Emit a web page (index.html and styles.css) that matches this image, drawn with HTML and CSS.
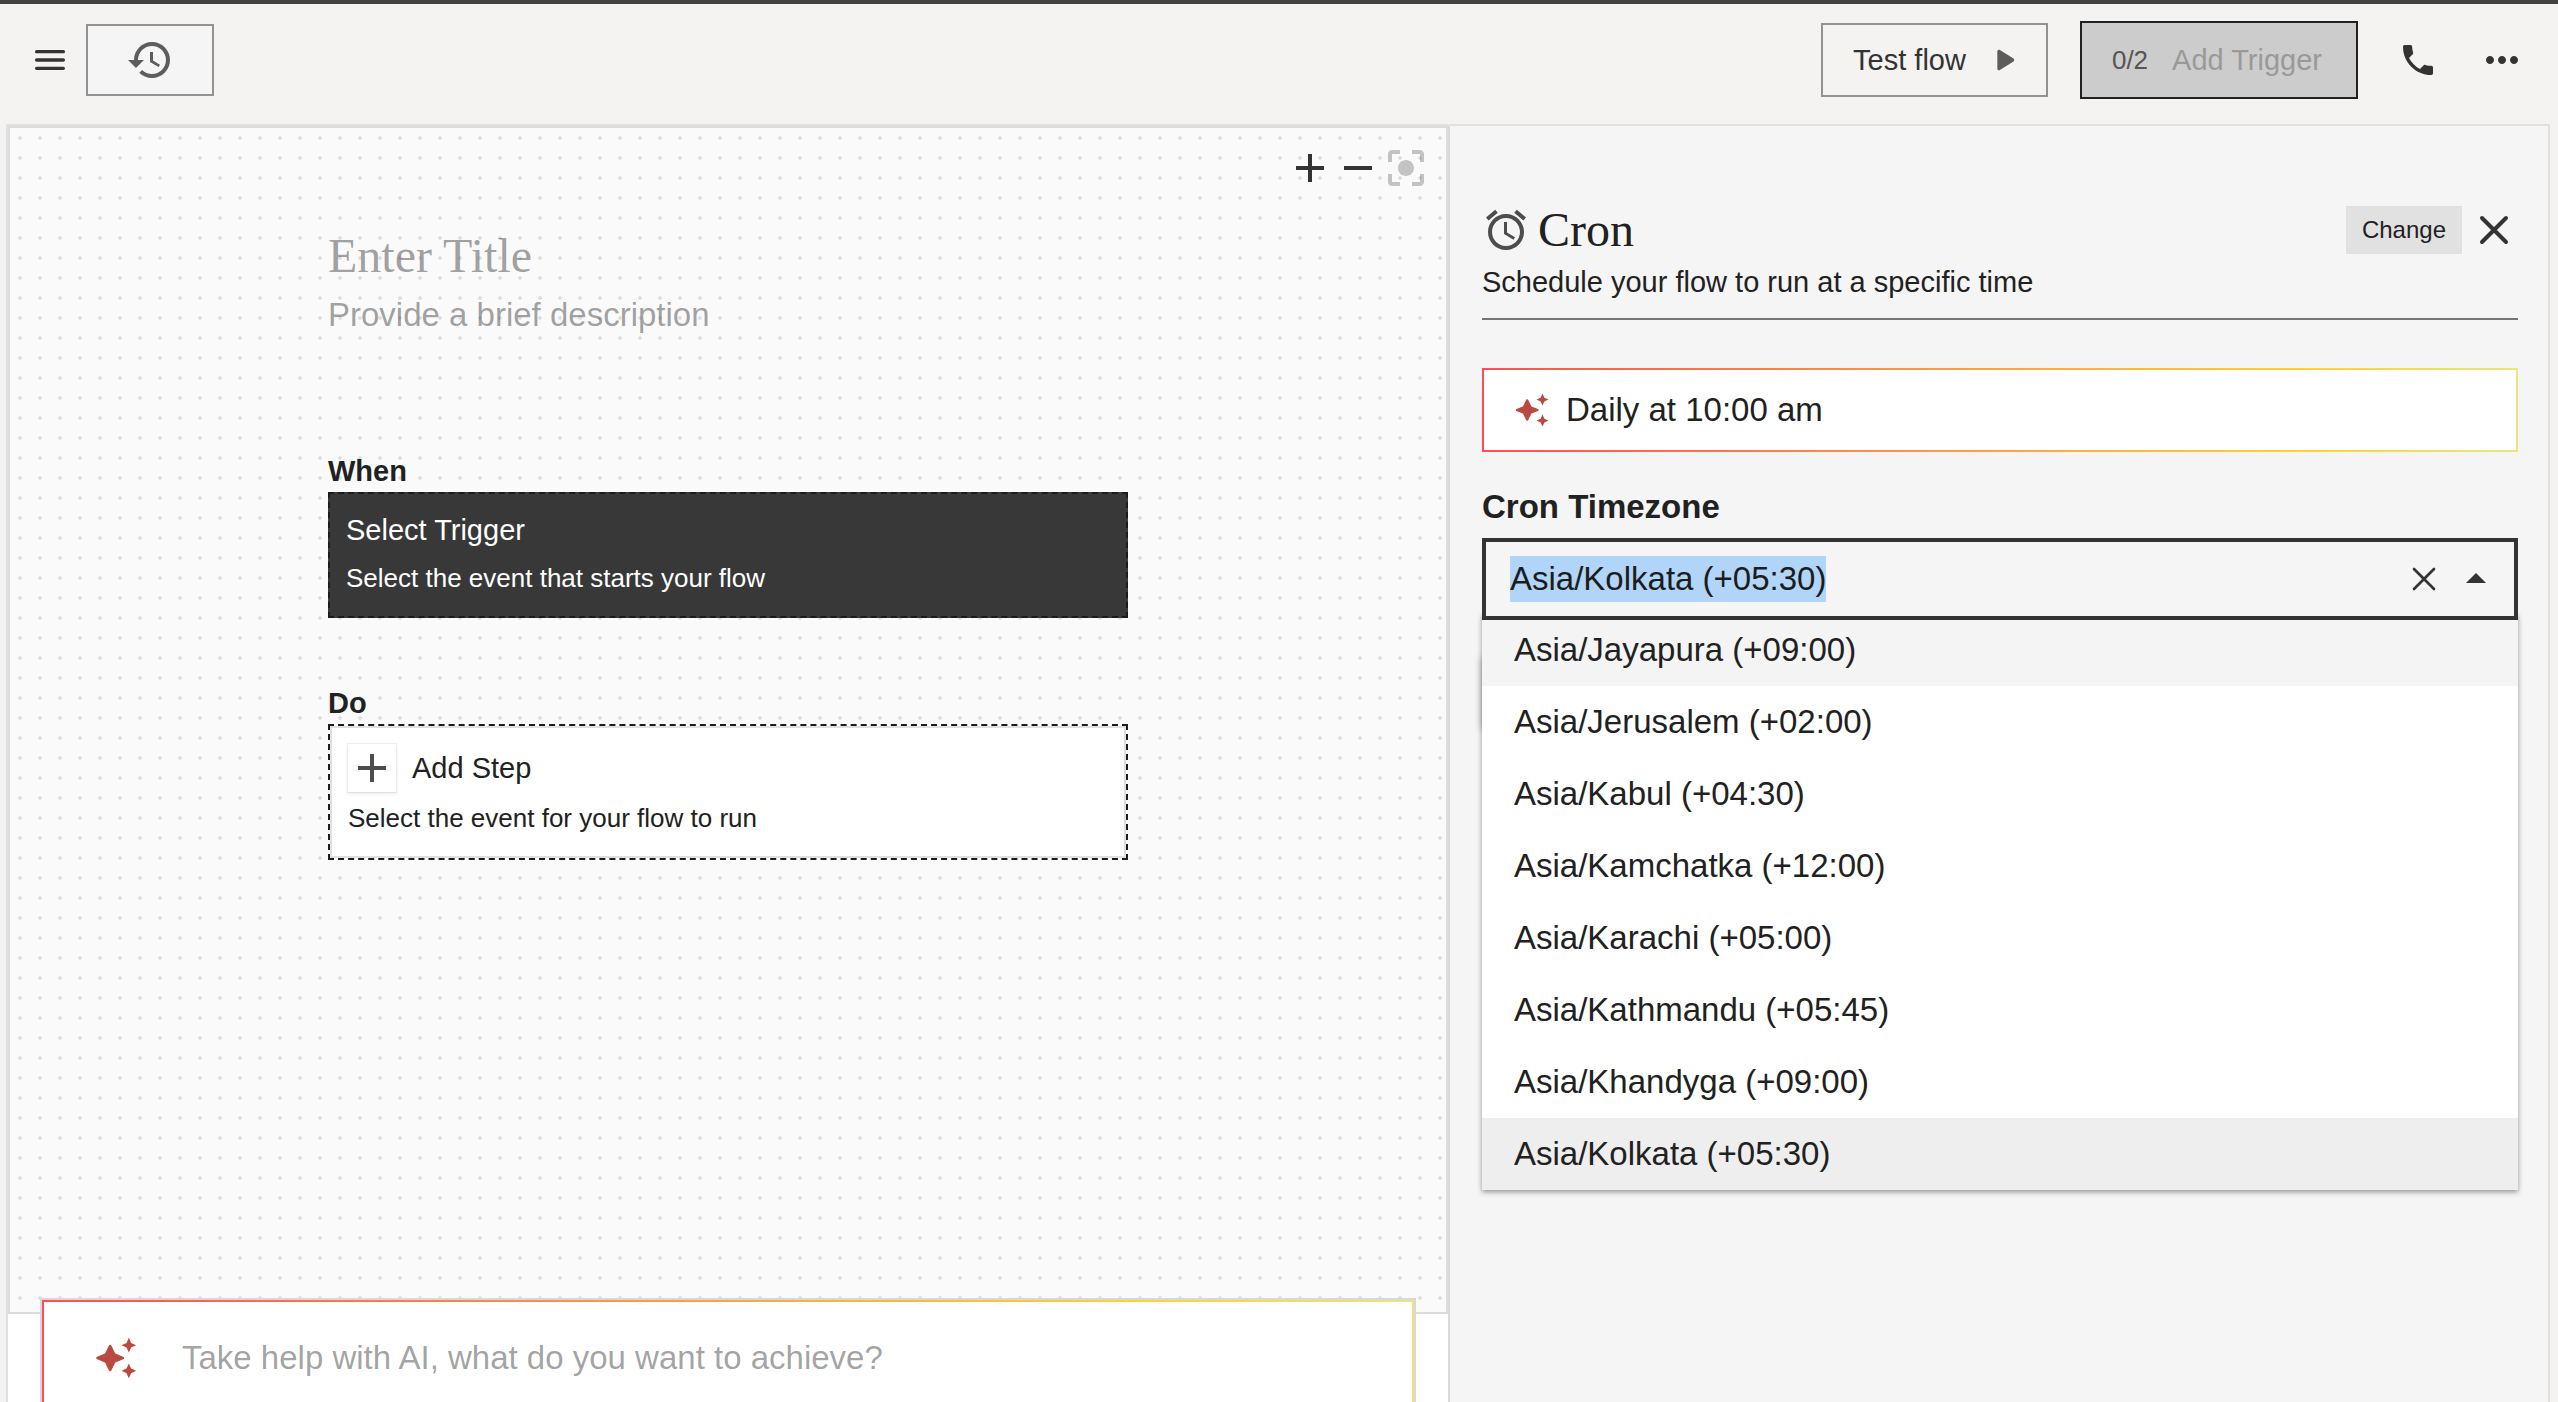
FILE: index.html
```html
<!DOCTYPE html>
<html lang="en">
<head>
  <meta charset="UTF-8">
  <title>Flow Builder</title>
  <link rel="stylesheet" href="styles.css">
</head>
<body>

<!-- Top bar -->
<header class="topbar">
  <button class="icon-btn" aria-label="Menu">
    <svg class="icon-md" viewBox="0 0 24 24"><path d="M4 18h16c.55 0 1-.45 1-1s-.45-1-1-1H4c-.55 0-1 .45-1 1s.45 1 1 1zm0-5h16c.55 0 1-.45 1-1s-.45-1-1-1H4c-.55 0-1 .45-1 1s.45 1 1 1zM3 7c0 .55.45 1 1 1h16c.55 0 1-.45 1-1s-.45-1-1-1H4c-.55 0-1 .45-1 1z"/></svg>
  </button>
  <button class="history-btn" aria-label="History">
    <svg class="icon-lg" viewBox="0 0 24 24"><path d="M13 3c-4.97 0-9 4.03-9 9H1l3.89 3.89.07.14L9 12H6c0-3.87 3.13-7 7-7s7 3.13 7 7-3.13 7-7 7c-1.93 0-3.68-.79-4.94-2.06l-1.42 1.42C8.27 19.99 10.51 21 13 21c4.97 0 9-4.03 9-9s-4.03-9-9-9zm-1 5v5l4.28 2.54.72-1.21-3.5-2.08V8H12z"/></svg>
  </button>
  <div class="topbar-right">
    <button class="test-btn">
      Test flow
      <svg class="icon-md" viewBox="0 0 24 24"><path d="M8 6.82v10.36c0 .79.87 1.27 1.54.84l8.14-5.18c.62-.39.62-1.29 0-1.69L9.54 5.98C8.87 5.55 8 6.03 8 6.82z"/></svg>
    </button>
    <button class="trigger-btn" disabled><span class="count">0/2</span>Add Trigger</button>
    <button class="icon-btn phone" aria-label="Call">
      <svg class="icon-md" viewBox="0 0 24 24"><path d="M6.62 10.79c1.44 2.83 3.76 5.14 6.59 6.59l2.2-2.2c.27-.27.67-.36 1.02-.24 1.12.37 2.33.57 3.57.57.55 0 1 .45 1 1V20c0 .55-.45 1-1 1-9.39 0-17-7.61-17-17 0-.55.45-1 1-1h3.5c.55 0 1 .45 1 1 0 1.25.2 2.45.57 3.57.11.35.03.74-.25 1.02l-2.2 2.2z"/></svg>
    </button>
    <button class="icon-btn" aria-label="More">
      <svg class="icon-lg" viewBox="0 0 24 24"><path d="M6 10c-1.1 0-2 .9-2 2s.9 2 2 2 2-.9 2-2-.9-2-2-2zm12 0c-1.1 0-2 .9-2 2s.9 2 2 2 2-.9 2-2-.9-2-2-2zm-6 0c-1.1 0-2 .9-2 2s.9 2 2 2 2-.9 2-2-.9-2-2-2z"/></svg>
    </button>
  </div>
</header>

<main class="workspace">

  <!-- Flow canvas -->
  <section class="editor">
    <div class="canvas">
      <div class="zoom-tools">
        <button class="icon-btn" aria-label="Zoom in">
          <svg class="icon-lg" viewBox="0 0 24 24"><path d="M19 13h-6v6h-2v-6H5v-2h6V5h2v6h6v2z"/></svg>
        </button>
        <button class="icon-btn" aria-label="Zoom out">
          <svg class="icon-lg" viewBox="0 0 24 24"><path d="M19 13H5v-2h14v2z"/></svg>
        </button>
        <button class="icon-btn" aria-label="Center" disabled>
          <svg class="icon-lg" viewBox="0 0 24 24"><path d="M12 8c-2.21 0-4 1.79-4 4s1.79 4 4 4 4-1.79 4-4-1.79-4-4-4zm-7 7H3v4c0 1.1.9 2 2 2h4v-2H5v-4zM5 5h4V3H5c-1.1 0-2 .9-2 2v4h2V5zm14-2h-4v2h4v4h2V5c0-1.1-.9-2-2-2zm0 16h-4v2h4c1.1 0 2-.9 2-2v-4h-2v4z"/></svg>
        </button>
      </div>

      <div class="flow">
        <input class="flow-title" type="text" placeholder="Enter Title" aria-label="Title">
        <input class="flow-desc" type="text" placeholder="Provide a brief description" aria-label="Description">

        <h2 class="step-label when">When</h2>
        <button class="step dark">
          <span class="step-name">Select Trigger</span>
          <span class="step-text">Select the event that starts your flow</span>
        </button>

        <h2 class="step-label do">Do</h2>
        <button class="step light">
          <span class="step-row">
            <span class="plus">
              <svg class="icon-md" viewBox="0 0 20 20"><path d="M17 11h-6v6H9v-6H3V9h6V3h2v6h6v2z"/></svg>
            </span>
            <span class="step-name">Add Step</span>
          </span>
          <span class="step-text">Select the event for your flow to run</span>
        </button>
      </div>
    </div>

    <div class="ai-bar">
      <div class="ai-inner gradient">
        <svg class="sparkle" viewBox="0 0 24 24"><path d="M19 9l1.25-2.75L23 5l-2.75-1.25L19 1l-1.25 2.75L15 5l2.75 1.25zM19 15l-1.25 2.75L15 19l2.75 1.25L19 23l1.25-2.75L23 19l-2.75-1.25z"/><path class="star" d="M8.8 5.6L6.6 10.2 2 12l4.6 1.8 2.2 4.6 2.2-4.6 4.6-1.8-4.6-1.8z"/></svg>
        <input class="ai-input" type="text" placeholder="Take help with AI, what do you want to achieve?" aria-label="Take help with AI">
      </div>
    </div>
  </section>

  <!-- Trigger settings -->
  <aside class="settings">
    <div class="settings-head">
      <div class="head-row">
        <svg class="icon-lg alarm" viewBox="0 0 24 24"><path d="M22 5.72l-4.6-3.86-1.29 1.53 4.6 3.86L22 5.72zM7.88 3.39L6.6 1.86 2 5.71l1.29 1.53 4.59-3.85zM12.5 8H11v6l4.75 2.85.75-1.23-4-2.37V8zM12 4c-4.97 0-9 4.03-9 9s4.02 9 9 9c4.97 0 9-4.03 9-9s-4.03-9-9-9zm0 16c-3.87 0-7-3.13-7-7s3.13-7 7-7 7 3.13 7 7-3.13 7-7 7z"/></svg>
        <h1>Cron</h1>
        <button class="change-btn">Change</button>
        <button class="icon-btn" aria-label="Close">
          <svg class="icon-lg line" viewBox="0 0 24 24"><path d="M6 6l12 12M18 6L6 18"/></svg>
        </button>
      </div>
      <p>Schedule your flow to run at a specific time</p>
    </div>

    <div class="schedule gradient">
      <svg class="sparkle" viewBox="0 0 24 24"><path d="M19 9l1.25-2.75L23 5l-2.75-1.25L19 1l-1.25 2.75L15 5l2.75 1.25zM19 15l-1.25 2.75L15 19l2.75 1.25L19 23l1.25-2.75L23 19l-2.75-1.25z"/><path class="star" d="M8.8 5.6L6.6 10.2 2 12l4.6 1.8 2.2 4.6 2.2-4.6 4.6-1.8-4.6-1.8z"/></svg>
      <input class="schedule-input" type="text" value="Daily at 10:00 am" aria-label="Schedule">
    </div>

    <label class="field-label" for="timezone">Cron Timezone</label>
    <div class="combo">
      <div class="combo-box">
        <input id="timezone" type="text" value="Asia/Kolkata (+05:30)" role="combobox" aria-expanded="true" aria-controls="timezoneList" autocomplete="off" spellcheck="false">
        <button class="icon-btn" aria-label="Clear">
          <svg class="icon-md line" viewBox="0 0 24 24"><path d="M6 6l12 12M18 6L6 18"/></svg>
        </button>
        <button class="icon-btn" aria-label="Close list">
          <svg class="icon-lg" viewBox="0 0 24 24"><path d="M7 14l5-5 5 5z"/></svg>
        </button>
      </div>
      <ul class="options" id="timezoneList" role="listbox" aria-label="Cron Timezone">
        <li class="hover" role="option">Asia/Jayapura (+09:00)</li>
        <li role="option">Asia/Jerusalem (+02:00)</li>
        <li role="option">Asia/Kabul (+04:30)</li>
        <li role="option">Asia/Kamchatka (+12:00)</li>
        <li role="option">Asia/Karachi (+05:00)</li>
        <li role="option">Asia/Kathmandu (+05:45)</li>
        <li role="option">Asia/Khandyga (+09:00)</li>
        <li class="selected" role="option" aria-selected="true">Asia/Kolkata (+05:30)</li>
      </ul>
    </div>
    <div class="card"></div>
  </aside>
</main>

<script>
  const timezone = document.getElementById("timezone");
  timezone.focus();
  timezone.select();
</script>

</body>
</html>
```

FILE: styles.css
```css
* { box-sizing: border-box; }
body {
  margin: 0;
  height: 100vh;
  display: flex;
  flex-direction: column;
  overflow: hidden;
  border-top: 4px solid #424242;
  background: #f4f3f1;
  color: #212121;
  font-family: "Liberation Sans", Arial, sans-serif;
  font-size: 29px;
  line-height: 40px;
}
h1, h2, p, ul { margin: 0; padding: 0; }
button, input {
  font: inherit;
  color: inherit;
  border: none;
  border-radius: 0;
  background: none;
  padding: 0;
  margin: 0;
  outline: none;
}
button { cursor: pointer; }
svg { display: block; fill: currentColor; flex: none; }
.icon-md { width: 40px; height: 40px; }
.icon-lg { width: 48px; height: 48px; }
.icon-btn { color: #333; }
.icon-btn:disabled { color: rgba(0,0,0,0.22); }
.line { fill: none; stroke: currentColor; stroke-width: 2; stroke-linecap: round; }

/* Top bar */
.topbar {
  flex: none;
  height: 120px;
  padding: 0 32px 8px 30px;
  display: flex;
  align-items: center;
}
.history-btn {
  width: 128px;
  height: 72px;
  margin-left: 16px;
  display: flex;
  align-items: center;
  justify-content: center;
  border: 2px solid #929292;
  background: #f5f5f5;
  color: #5c5c5c;
}
.topbar-right {
  margin-left: auto;
  display: flex;
  align-items: center;
  gap: 40px;
}
.test-btn {
  height: 74px;
  padding: 0 22px 0 30px;
  display: flex;
  align-items: center;
  gap: 18px;
  border: 2px solid #929292;
  margin-right: -8px;
  color: #333;
}
.test-btn svg { color: #5c5c5c; }
.trigger-btn {
  height: 78px;
  padding: 0 34px 0 30px;
  display: flex;
  align-items: center;
  gap: 24px;
  border: 2px solid #212121;
  background: #ccc;
  color: #999;
}
.count { font-size: 26px; color: #555; }

/* Workspace */
.workspace {
  flex: 1;
  min-height: 0;
  margin: 0 8px 0 6px;
  display: grid;
  grid-template-columns: 1fr 1100px;
  border: 2px solid #e0e0e0;
  border-width: 2px 0 0 2px;
}
.editor {
  min-height: 0;
  display: flex;
  flex-direction: column;
  background: #fff;
  border-right: 2px solid #dadada;
}
.canvas {
  flex: 1;
  position: relative;
  border: 2px solid #dcdcdc;
  background: #fafafa radial-gradient(circle, #e0e0e0 2px, transparent 2px) 0 0 / 20px 20px;
}
.zoom-tools {
  position: absolute;
  top: 16px;
  right: 16px;
  display: flex;
}
.flow {
  width: 800px;
  margin: 0 auto;
  padding-top: 100px;
  display: flex;
  flex-direction: column;
}
.flow-title {
  height: 56px;
  font-family: "Liberation Serif", "Times New Roman", serif;
  font-size: 48px;
  line-height: 56px;
}
.flow-desc {
  height: 46px;
  margin-top: 8px;
  font-size: 33px;
  line-height: 46px;
}
input::placeholder { color: rgba(33,33,33,0.42); opacity: 1; }
.step-label { font-size: 29px; line-height: 38px; margin-bottom: 2px; }
.when { margin-top: 114px; }
.do { margin-top: 66px; }
.step {
  display: flex;
  flex-direction: column;
  align-items: flex-start;
  gap: 8px;
  padding: 18px 18px 22px;
  border: 2px dashed #1c1c1c;
  text-align: left;
}
.dark { background: #383838; color: #fff; padding: 16px 16px 20px; gap: 10px; }
.light { background: #fff; box-shadow: inset 0 0 0 2px #e0e0e0; }
.step-text { font-size: 26px; line-height: 36px; }
.step-row { display: flex; align-items: center; gap: 16px; }
.plus {
  width: 48px;
  height: 48px;
  display: flex;
  align-items: center;
  justify-content: center;
  color: #4d4d4d;
  box-shadow: 0 0 1px 1px rgba(0,0,0,0.06), 0 2px 4px rgba(0,0,0,0.08);
}

/* AI prompt */
.gradient {
  background: #fff;
  border: 2px solid;
  border-image: linear-gradient(to right, #ff4d58, #fca944 53%, #fcd337 80%, #ebe480) 1;
}
.sparkle { width: 36px; height: 36px; color: #b94a40; }
.star { stroke: currentColor; stroke-width: 1.6; stroke-linejoin: round; }
.ai-bar {
  position: relative;
  height: 120px;
  margin: -16px 32px -16px;
  border: 2px solid #d8d8d8;
}
.ai-inner {
  height: 100%;
  padding: 0 50px;
  display: flex;
  align-items: center;
  gap: 44px;
}
.ai-inner .sparkle { width: 44px; height: 44px; }
.ai-input, .schedule-input {
  flex: 1;
  height: 46px;
  font-size: 33px;
  line-height: 46px;
}

/* Settings panel */
.settings {
  min-height: 0;
  padding: 80px 30px 0 32px;
  background: #f5f5f5;
  border-right: 2px solid #e0e0e0;
}
.settings-head { padding-bottom: 16px; border-bottom: 2px solid #757575; }
.head-row {
  display: flex;
  align-items: center;
  gap: 8px;
  margin-bottom: 8px;
}
.alarm { color: #4d4d4d; }
h1 {
  flex: 1;
  font-family: "Liberation Serif", "Times New Roman", serif;
  font-size: 48px;
  line-height: 48px;
  font-weight: normal;
}
.change-btn {
  height: 48px;
  padding: 0 16px;
  background: #e1e1e1;
  font-size: 24px;
}
.schedule {
  height: 84px;
  margin-top: 48px;
  padding: 0 30px;
  display: flex;
  align-items: center;
  gap: 16px;
}
.field-label {
  display: block;
  margin: 32px 0 8px;
  font-size: 33px;
  line-height: 46px;
  font-weight: bold;
}
.combo { position: relative; font-size: 33px; line-height: 46px; }
.combo-box {
  position: relative;
  z-index: 2;
  height: 82px;
  padding: 0 14px 0 24px;
  display: flex;
  align-items: center;
  gap: 8px;
  background: #f5f5f5;
  border: 4px solid #333;
}
.combo-box input { flex: 1; height: 46px; }
.combo-box input::selection { background: rgba(176,211,249,0.99); color: #1c1c1c; }
.combo-box .line { stroke-width: 1.6; }
.options {
  position: absolute;
  z-index: 1;
  top: 76px;
  left: 0;
  right: 0;
  list-style: none;
  background: #fff;
  box-shadow: 0 2px 5px rgba(0,0,0,0.4);
}
.options li { padding: 13px 32px; cursor: pointer; }
.hover { background: #f4f4f4; }
.selected { background: #eee; }
.card {
  width: 240px;
  height: 72px;
  margin-top: 36px;
  box-shadow: 0 2px 8px rgba(0,0,0,0.3);
}
```
